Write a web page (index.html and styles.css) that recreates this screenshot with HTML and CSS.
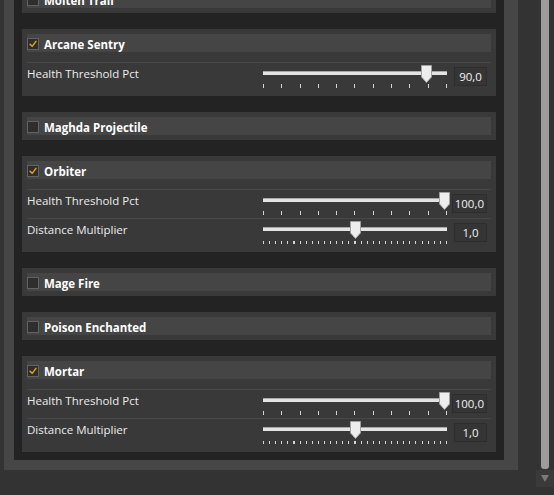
FILE: index.html
```html
<!DOCTYPE html>
<html>
<head>
<meta charset="utf-8">
<title>Settings</title>
<link rel="stylesheet" href="styles.css">
</head>
<body>
<div class="frame">
  <div class="panel">
    <div class="list">
      <section class="group">
        <div class="group-head"><span class="cb"></span><span class="title">Molten Trail</span></div>
      </section>

      <section class="group">
        <div class="group-head"><span class="cb"><svg viewBox="0 0 12 12"><polyline points="2.5,6.3 5,8.8 9.6,2.8"/></svg></span><span class="title">Arcane Sentry</span></div>
        <div class="rows">
          <div class="row">
            <span class="label">Health Threshold Pct</span>
            <div class="slider" style="--v:0.9">
              <div class="track"></div>
              <div class="ticks t10"></div>
              <svg class="thumb" viewBox="0 0 11 18"><path d="M0.5 0.5H10.5V12L5.5 17.5L0.5 12Z"/></svg>
            </div>
            <div class="value-wrap"><span class="value">90,0</span></div>
          </div>
        </div>
      </section>

      <section class="group">
        <div class="group-head"><span class="cb"></span><span class="title">Maghda Projectile</span></div>
      </section>

      <section class="group">
        <div class="group-head"><span class="cb"><svg viewBox="0 0 12 12"><polyline points="2.5,6.3 5,8.8 9.6,2.8"/></svg></span><span class="title">Orbiter</span></div>
        <div class="rows">
          <div class="row">
            <span class="label">Health Threshold Pct</span>
            <div class="slider" style="--v:1">
              <div class="track"></div>
              <div class="ticks t10"></div>
              <svg class="thumb" viewBox="0 0 11 18"><path d="M0.5 0.5H10.5V12L5.5 17.5L0.5 12Z"/></svg>
            </div>
            <div class="value-wrap"><span class="value">100,0</span></div>
          </div>
          <div class="row">
            <span class="label">Distance Multiplier</span>
            <div class="slider" style="--v:0.5">
              <div class="track"></div>
              <div class="ticks t30"></div>
              <svg class="thumb" viewBox="0 0 11 18"><path d="M0.5 0.5H10.5V12L5.5 17.5L0.5 12Z"/></svg>
            </div>
            <div class="value-wrap"><span class="value">1,0</span></div>
          </div>
        </div>
      </section>

      <section class="group">
        <div class="group-head"><span class="cb"></span><span class="title">Mage Fire</span></div>
      </section>

      <section class="group">
        <div class="group-head"><span class="cb"></span><span class="title">Poison Enchanted</span></div>
      </section>

      <section class="group">
        <div class="group-head"><span class="cb"><svg viewBox="0 0 12 12"><polyline points="2.5,6.3 5,8.8 9.6,2.8"/></svg></span><span class="title">Mortar</span></div>
        <div class="rows">
          <div class="row">
            <span class="label">Health Threshold Pct</span>
            <div class="slider" style="--v:1">
              <div class="track"></div>
              <div class="ticks t10"></div>
              <svg class="thumb" viewBox="0 0 11 18"><path d="M0.5 0.5H10.5V12L5.5 17.5L0.5 12Z"/></svg>
            </div>
            <div class="value-wrap"><span class="value">100,0</span></div>
          </div>
          <div class="row">
            <span class="label">Distance Multiplier</span>
            <div class="slider" style="--v:0.5">
              <div class="track"></div>
              <div class="ticks t30"></div>
              <svg class="thumb" viewBox="0 0 11 18"><path d="M0.5 0.5H10.5V12L5.5 17.5L0.5 12Z"/></svg>
            </div>
            <div class="value-wrap"><span class="value">1,0</span></div>
          </div>
        </div>
      </section>
    </div>
  </div>
</div>

<div class="scrollbar">
  <div class="sb-track"><div class="sb-thumb"></div></div>
  <div class="sb-down"><svg viewBox="0 0 8 7"><path d="M0 0H8L4 7Z"/></svg></div>
</div>
</body>
</html>
```

FILE: styles.css
```css
html, body {
  margin: 0;
  padding: 0;
}

body {
  background: #333333;
  height: 495px;
  overflow: hidden;
  display: flex;
  align-items: flex-start;
  gap: 18px;
  padding-left: 4px;
  box-sizing: border-box;
  font-family: "Open Sans", "Noto Sans", "Liberation Sans", sans-serif;
  font-size: 11.5px;
  color: #ececec;
}

.frame {
  width: 514px;
  height: 470px;
  flex-shrink: 0;
  box-sizing: border-box;
  background: #464646;
  padding: 0 14px 10px 10px;
  display: flex;
}

.panel {
  flex: 1;
  background: #232323;
  padding: 0 8px 8px 8px;
  overflow: hidden;
  display: flex;
  flex-direction: column;
  justify-content: flex-end;
}

.list {
  flex-shrink: 0;
  display: flex;
  flex-direction: column;
  gap: 16px;
}

.group {
  background: #393939;
  padding: 5px;
}

.group-head {
  height: 18px;
  background: #454545;
  display: flex;
  align-items: flex-start;
  gap: 5px;
}

.cb {
  margin-top: 4px;
  width: 12px;
  height: 12px;
  box-sizing: border-box;
  border: 1px solid #626262;
  background: #2e2e2e;
  display: flex;
}

.cb svg {
  width: 10px;
  height: 10px;
}

.cb polyline {
  fill: none;
  stroke: #e3a21a;
  stroke-width: 1.8;
  stroke-linecap: round;
  stroke-linejoin: round;
}

.title {
  font-weight: 700;
  color: #ffffff;
  line-height: 16px;
  padding-top: 3px;
}

.rows {
  margin-top: 10px;
}

.row {
  border-top: 1px solid #474747;
  height: 28px;
  display: flex;
  align-items: flex-start;
}

.label {
  flex: 1;
  line-height: 16px;
  padding-top: 3px;
}

.slider {
  width: 184px;
  height: 28px;
  position: relative;
  display: flex;
  flex-direction: column;
}

.track {
  margin-top: 9px;
  height: 3px;
  background: #e4e4e4;
  box-shadow: 0 -1px 0 #a8a8a8;
}

.ticks {
  margin-top: 9px;
  height: 4px;
}

.ticks.t10 {
  background: repeating-linear-gradient(to right, #d4d4d4 0 1px, transparent 1px 18.3px);
}

.ticks.t30 {
  height: 3px;
  margin-top: 10px;
  background: repeating-linear-gradient(to right, #d4d4d4 0 1px, transparent 1px 6.1px);
}

.thumb {
  position: absolute;
  top: 2px;
  left: calc(4px + var(--v) * 177px - 5.5px);
  width: 11px;
  height: 18px;
}

.thumb path {
  fill: #ededed;
  stroke: #a0a0a0;
  stroke-width: 1;
}

.value-wrap {
  width: 40px;
  display: flex;
  justify-content: flex-end;
  margin-right: 4px;
}

.value {
  margin-top: 4px;
  min-width: 33px;
  height: 19px;
  box-sizing: border-box;
  padding: 0 2px;
  background: #353535;
  border: 1px solid #2d2d2d;
  text-align: center;
  line-height: 17px;
  color: #f2f2f2;
}

.scrollbar {
  width: 18px;
  height: 487px;
  flex-shrink: 0;
  display: flex;
  flex-direction: column;
}

.sb-track {
  height: 470px;
}

.sb-thumb {
  margin-left: 5px;
  width: 8px;
  height: 469px;
  background: #9c9c9c;
  border-radius: 0 0 3px 3px;
}

.sb-down {
  height: 17px;
  background: #3a3a3a;
  display: flex;
  align-items: center;
  justify-content: center;
}

.sb-down svg {
  width: 8px;
  height: 7px;
}

.sb-down path {
  fill: #7a7a7a;
}
```
